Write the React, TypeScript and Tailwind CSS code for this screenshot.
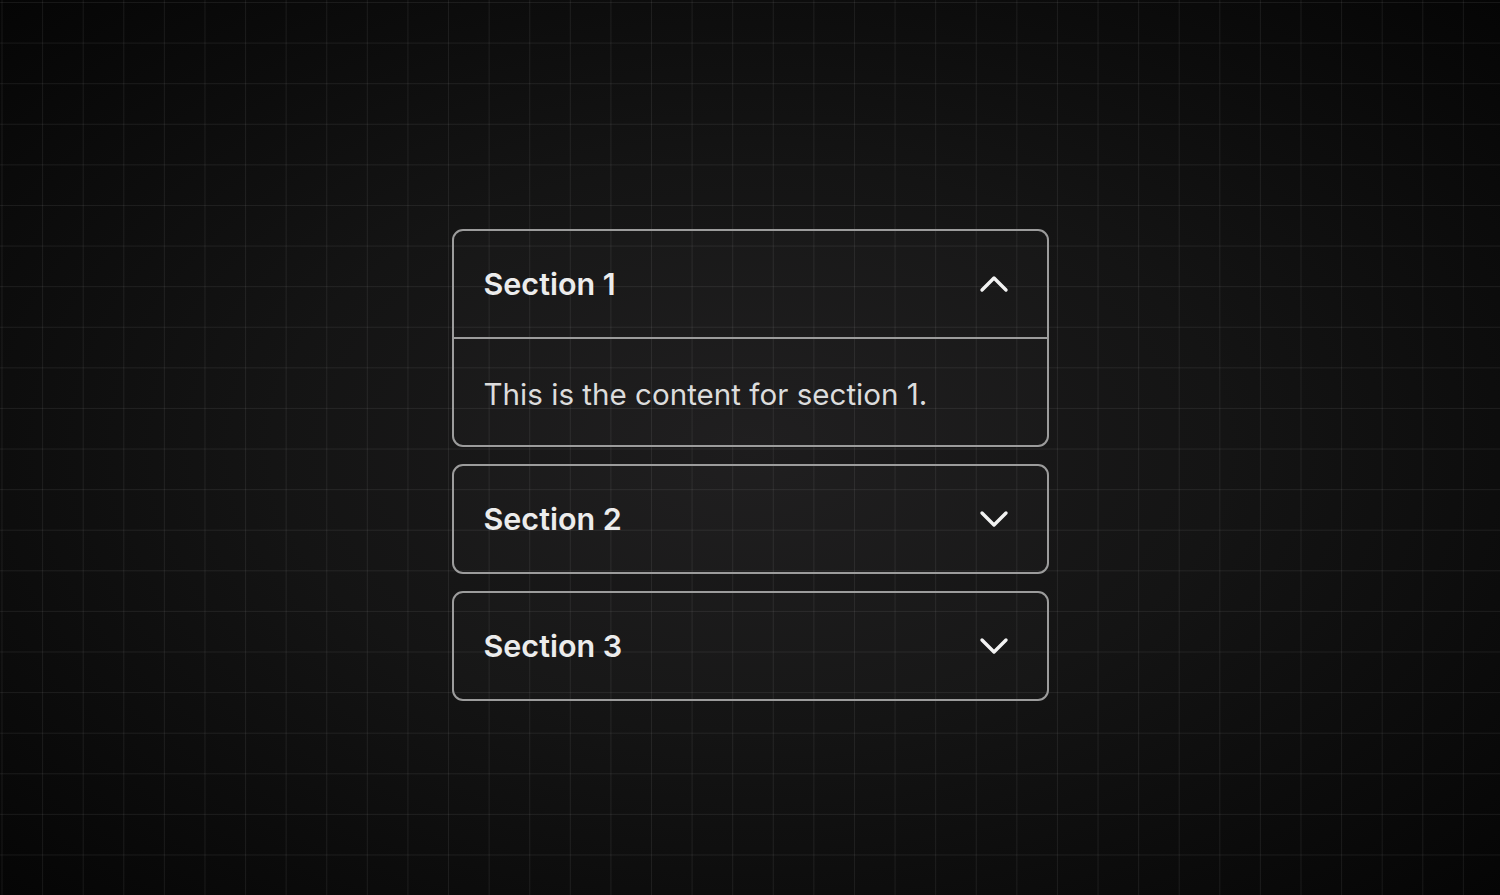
import { useState } from 'react';
import { ChevronDown, ChevronUp } from 'lucide-react';

const sections = [
  { title: 'Section 1', body: 'This is the content for section 1.' },
  { title: 'Section 2', body: 'This is the content for section 2.' },
  { title: 'Section 3', body: 'This is the content for section 3.' },
];

export default function App() {
  const [open, setOpen] = useState<number | null>(0);

  return (
    <div className="min-h-[895px] w-full bg-[#0a0a0a] [background-image:linear-gradient(to_right,rgba(255,255,255,0.07)_1px,transparent_1px),linear-gradient(to_bottom,rgba(255,255,255,0.07)_1px,transparent_1px),radial-gradient(ellipse_at_center,#1d1c1d_0%,#141414_45%,#050505_100%)] [background-size:40.6px_40.6px,40.6px_40.6px,100%_100%] [background-position:1.5px_2px,1.5px_2px,0_0] font-['Inter',sans-serif]">
      <div className="mx-auto flex w-[597px] flex-col gap-[17px] pt-[229px]">
        {sections.map((s, i) => {
          const isOpen = open === i;
          return (
            <div key={s.title} className="rounded-[11px] border-2 border-[#9c9c9c] bg-white/[0.015]">
              <button
                onClick={() => setOpen(isOpen ? null : i)}
                className="flex h-[106px] w-full items-center justify-between pl-[30px] pr-[29px] text-left"
              >
                <span className="text-[30.5px] font-semibold text-[#ececec]">{s.title}</span>
                {isOpen ? (
                  <ChevronUp size={48} strokeWidth={1.7} className="text-[#f2f2f2]" />
                ) : (
                  <ChevronDown size={48} strokeWidth={1.7} className="text-[#f2f2f2]" />
                )}
              </button>
              {isOpen && (
                <div className="flex h-[108px] items-center border-t-2 border-[#9c9c9c] px-[30px] pt-[5px]">
                  <p className="text-[29.6px] text-[#dcdcdc]">{s.body}</p>
                </div>
              )}
            </div>
          );
        })}
      </div>
    </div>
  );
}
